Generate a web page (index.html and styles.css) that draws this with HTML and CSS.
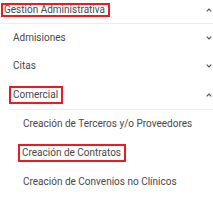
FILE: index.html
```html
<!DOCTYPE html>
<html>
<head>
<meta charset="utf-8">
<link rel="stylesheet" href="styles.css">
</head>
<body>
<div class="menu">
  <div class="row top">
    <span class="label boxed top-label">Gestión Administrativa</span>
    <svg class="chev" viewBox="0 0 6 4" width="6" height="4"><path d="M0.7 3.3 L3 1 L5.3 3.3" fill="none" stroke="#555" stroke-width="1.2"/></svg>
  </div>
  <div class="sub">
    <div class="row l2">
      <span class="label">Admisiones</span>
      <svg class="chev" viewBox="0 0 6 4" width="6" height="4"><path d="M0.7 0.7 L3 3 L5.3 0.7" fill="none" stroke="#555" stroke-width="1.2"/></svg>
    </div>
    <div class="row l2">
      <span class="label">Citas</span>
      <svg class="chev" viewBox="0 0 6 4" width="6" height="4"><path d="M0.7 0.7 L3 3 L5.3 0.7" fill="none" stroke="#555" stroke-width="1.2"/></svg>
    </div>
    <div class="row l2 open">
      <span class="label boxed mid-label">Comercial</span>
      <svg class="chev" viewBox="0 0 6 4" width="6" height="4"><path d="M0.7 3.3 L3 1 L5.3 3.3" fill="none" stroke="#555" stroke-width="1.2"/></svg>
    </div>
    <div class="leaves">
      <div class="row l3"><span class="label">Creación de Terceros y/o Proveedores</span></div>
      <div class="row l3"><span class="label boxed mid-label">Creación de Contratos</span></div>
      <div class="row l3"><span class="label">Creación de Convenios no Clínicos</span></div>
    </div>
  </div>
</div>
</body>
</html>
```
FILE: styles.css
```css
html, body {
  margin: 0;
  padding: 0;
  background: #fff;
}
.menu {
  width: 213px;
  font-family: Roboto, "Liberation Sans", sans-serif;
  font-size: 10px;
  line-height: 12px;
  color: #484848;
}
.row {
  display: flex;
  align-items: center;
  justify-content: space-between;
  padding-right: 1px;
}
.top {
  height: 24px;
  box-sizing: border-box;
  align-items: flex-start;
  padding-top: 3px;
  padding-left: 1px;
  border-bottom: 1px solid #ececec;
}
.top .chev {
  margin-top: 5px;
}
.sub {
  padding-left: 9px;
}
.l2 {
  height: 28px;
  padding-left: 4px;
}
.l2.open {
  height: 28px;
  padding-top: 1px;
  border-bottom: 1px solid #ececec;
}
.leaves {
  padding-left: 9px;
  margin-top: -1px;
}
.l3 {
  height: 29px;
  padding-left: 5px;
}
.boxed {
  border: 2px solid #ea1b22;
}
.top-label {
  line-height: 10px;
  padding: 0 3px 0 1px;
}
.mid-label {
  padding: 1px 3px 1px 2px;
  margin-left: -4px;
}
.l3 .mid-label {
  margin-left: -5px;
}
.chev {
  display: block;
}
```
